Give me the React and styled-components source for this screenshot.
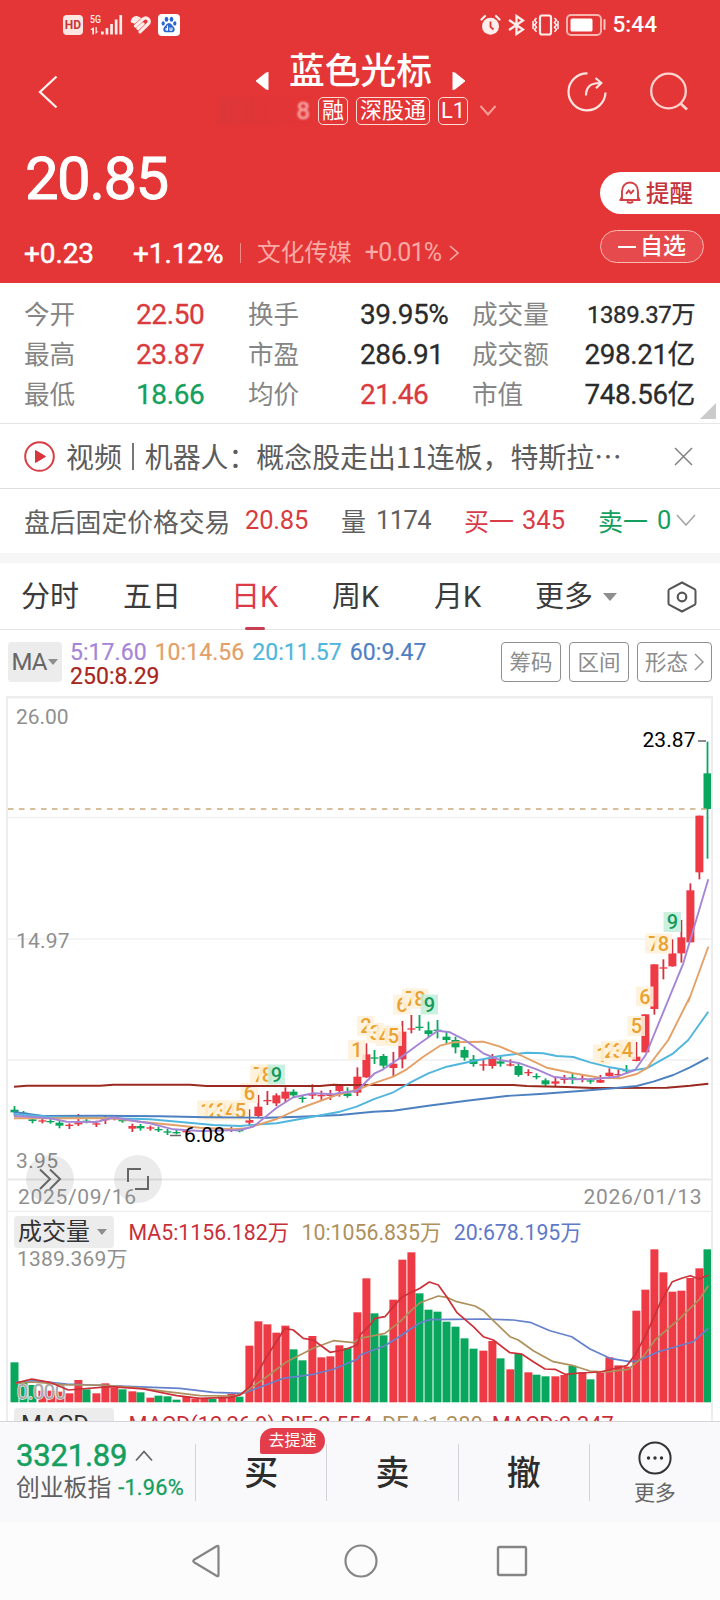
import React from "react";
import styled, { createGlobalStyle } from "styled-components";

const RED = "#e43537";
const UP = "#ee3a45";
const DOWN = "#08a75d";

const Global = createGlobalStyle`
  * { box-sizing: border-box; }
  body { margin: 0; background: #fff; font-family: Roboto, "Noto Sans CJK SC", sans-serif; }
  svg { display: block; flex: none; }
`;

const Screen = styled.div`
  width: 720px;
  height: 1600px;
  display: flex;
  flex-direction: column;
  overflow: hidden;
  background: #fff;
`;

/* ---------- red header ---------- */
const Header = styled.header`
  height: 283px;
  background: ${RED};
  color: #fff;
  flex: none;
`;
const StatusBar = styled.div`
  height: 50px;
  padding: 0 63px 0 63px;
  display: flex;
  align-items: center;
  justify-content: space-between;
`;
const StatusGroup = styled.div`
  display: flex;
  align-items: center;
  gap: ${(p) => p.$gap}px;
`;
const HdBadge = styled.span`
  width: 20px;
  height: 20px;
  border-radius: 4px;
  background: #fde6e2;
  color: #c8343a;
  font: 700 12px/20px Roboto, sans-serif;
  text-align: center;
`;
const Clock = styled.span`
  margin-left: -1px;
  font-size: 22.6px;
  font-weight: 500;
  line-height: 50px;
`;
const TitleBar = styled.div`
  height: 84px;
  display: flex;
  align-items: center;
  padding: 0 32px 0 38px;
`;
const TitleBlock = styled.div`
  width: 420px;
  margin-left: 94px;
  height: 84px;
`;
const TitleLine = styled.div`
  display: flex;
  align-items: center;
  justify-content: center;
  height: 43px;
  gap: 20px;
  padding: 2px 0 0 2px;
`;
const StockName = styled.h1`
  margin: 0;
  font-size: 35.8px;
  line-height: 43px;
  font-weight: 500;
`;
const TagLine = styled.div`
  display: flex;
  align-items: center;
  height: 28px;
  margin-top: 4px;
  padding-left: 66px;
  gap: 8px;
`;
const MaskedCode = styled.span`
  width: 92px;
  padding-right: 0;
  text-align: right;
  font-size: 24px;
  line-height: 28px;
  color: rgba(255, 225, 220, 0.85);
  background: linear-gradient(90deg, rgba(205, 60, 65, 0.3), rgba(228, 53, 55, 0.1));
  filter: blur(1px);
`;
const Tag = styled.span`
  height: 28px;
  width: ${(p) => p.$w}px;
  border: 1.4px solid #ffd9d2;
  border-radius: 5px;
  display: flex;
  justify-content: center;
  font-size: 22px;
  line-height: 25px;
  white-space: nowrap;
`;
const HeaderIcons = styled.div`
  display: flex;
  gap: 43px;
  margin-left: auto;
`;
const PriceArea = styled.div`
  display: flex;
  justify-content: space-between;
  height: 149px;
`;
const PriceColumn = styled.div`
  padding-left: 24px;
`;
const BigPrice = styled.div`
  font-size: 60px;
  line-height: 70px;
  height: 70px;
  margin: 10px 0 0 1px;
  font-weight: 400;
  -webkit-text-stroke: 0.9px #fff;
  letter-spacing: -1.6px;
`;
const ChangeLine = styled.div`
  display: flex;
  align-items: center;
  height: 40px;
  margin-top: 19px;
`;
const Change = styled.span`
  width: ${(p) => p.$w}px;
  font-size: 28px;
  -webkit-text-stroke: 0.5px #fff;
  letter-spacing: -0.1px;
`;
const Sector = styled.span`
  display: flex;
  align-items: center;
  gap: 13px;
  height: 20px;
  padding-left: 16px;
  border-left: 1px solid #f08a86;
  color: #f9aaa4;
  font-size: 23.7px;
  line-height: 20px;
`;
const SectorRate = styled.span`
  font-size: 25px;
  letter-spacing: -0.8px;
  margin-right: -5px;
`;
const SideActions = styled.div`
  width: 120px;
  padding-top: 38px;
`;
const RemindButton = styled.div`
  height: 42px;
  border-radius: 21px 0 0 21px;
  background: #fff;
  color: #c5333a;
  display: flex;
  align-items: center;
  gap: 5px;
  padding: 0 0 2px 19px;
  font-size: 23.5px;
  font-weight: 500;
`;
const WatchButton = styled.div`
  width: 104px;
  height: 33px;
  margin-top: 16px;
  border-radius: 17px;
  border: 1.3px solid #fbb9b3;
  background: #e74a4d;
  display: flex;
  align-items: center;
  justify-content: center;
  gap: 4px;
  padding-top: 1px;
  font-size: 23px;
  font-weight: 500;
  line-height: 30px;
`;
const Minus = styled.i`
  width: 18px;
  height: 2px;
  background: #fff;
`;

/* ---------- stats ---------- */
const Stats = styled.section`
  position: relative;
  height: 141px;
  flex: none;
  padding: 12px 25px 0 24px;
  border-bottom: 1.5px solid #e6e6e6;
  display: grid;
  grid-template-columns: 112px 112px 112px 112px 1fr;
  grid-auto-rows: 40px;
`;
const StatLabel = styled.span`
  font-size: 25.6px;
  line-height: 40px;
  color: #858585;
`;
const StatValue = styled.span`
  font-size: ${(p) => p.$size || 28}px;
  line-height: 40px;
  letter-spacing: -0.4px;
  white-space: nowrap;
  color: ${(p) => p.$color || "#2b2b2b"};
  -webkit-text-stroke: 0.3px currentColor;
`;
const StatPair = styled.div`
  display: flex;
  justify-content: space-between;
`;
const Corner = styled.i`
  position: absolute;
  right: 4px;
  bottom: 4px;
  border-left: 16px solid transparent;
  border-bottom: 16px solid #cacaca;
`;

/* ---------- news and after-hours rows ---------- */
const NewsRow = styled.section`
  height: 65px;
  flex: none;
  border-bottom: 1.5px solid #dedede;
  display: flex;
  align-items: center;
  padding: 0 27px 0 24px;
`;
const NewsText = styled.span`
  margin-left: 11px;
  font: 400 27.9px/40px "Noto Sans CJK SC", sans-serif;
  color: #5c5c5c;
  white-space: nowrap;
  display: flex;
  align-items: center;
`;
const NewsDivider = styled.i`
  width: 2px;
  height: 27px;
  background: #777;
  margin: 0 11px 0 10px;
`;
const NewsClose = styled.div`
  margin-left: auto;
`;
const FixedPriceRow = styled.section`
  height: 64px;
  flex: none;
  display: grid;
  grid-template-columns: 221px 96px 35px 88px 58px 76px 59px 19px 18px;
  align-items: center;
  padding: 0 0 2px 24px;
  white-space: nowrap;
`;
const FixedText = styled.span`
  font-size: ${(p) => p.$size || 25.5}px;
  color: ${(p) => p.$color || "#5f5f5f"};
  letter-spacing: ${(p) => p.$ls || 0}px;
`;
const Band = styled.div`
  height: 10px;
  flex: none;
  background: #f6f6f6;
`;

/* ---------- tabs ---------- */
const Tabs = styled.nav`
  height: 67px;
  flex: none;
  display: grid;
  grid-template-columns: 102px 108px 101px 102px 101px 132px 30px;
  padding-left: 21px;
  border-bottom: 1.5px solid #e4e4e4;
`;
const Tab = styled.span`
  position: relative;
  display: flex;
  align-items: center;
  gap: 10px;
  font-size: 29px;
  line-height: 66px;
  padding-top: ${(p) => (p.$icon ? 0 : 1)}px;
  color: ${(p) => (p.$active ? "#dc3a48" : "#3b3b3b")};
  &::after {
    content: "";
    display: ${(p) => (p.$active ? "block" : "none")};
    position: absolute;
    left: 14px;
    bottom: 0;
    width: 20px;
    height: 3px;
    border-radius: 2px;
    background: #c93f52;
  }
`;
const Caret = styled.i`
  border: ${(p) => p.$s}px solid transparent;
  border-bottom: 0;
  border-top: ${(p) => p.$s + 1}px solid ${(p) => p.$color || "#8e8e8e"};
`;

/* ---------- moving average row ---------- */
const AverageRow = styled.section`
  height: 66px;
  flex: none;
  display: flex;
  padding: 12px 8px 0 8px;
`;
const MaPicker = styled.div`
  width: 54px;
  height: 40px;
  border-radius: 4px;
  background: #ececec;
  color: #666;
  font-size: 24px;
  letter-spacing: -1px;
  display: flex;
  align-items: center;
  justify-content: center;
  gap: 2px;
`;
const MaValues = styled.div`
  width: 400px;
  margin: -1px 0 0 8px;
  display: flex;
  flex-wrap: wrap;
  align-content: flex-start;
  column-gap: 8px;
`;
const MaValue = styled.span`
  font-size: 23px;
  line-height: 24px;
  color: ${(p) => p.$color};
  letter-spacing: 0.05px;
  -webkit-text-stroke: 0.2px currentColor;
`;
const ToolButtons = styled.div`
  display: flex;
  gap: 8px;
  margin-left: auto;
`;
const ToolButton = styled.span`
  width: ${(p) => p.$w}px;
  height: 40px;
  padding-bottom: 3px;
  border: 1.3px solid #8f8f8f;
  border-radius: 4px;
  color: #8c8c8c;
  font-size: 21.5px;
  display: flex;
  align-items: center;
  justify-content: center;
  gap: 6px;
  svg { margin-top: 3px; }
`;

/* ---------- charts ---------- */
const ChartPanel = styled.section`
  height: 725px;
  flex: none;
  margin: 0 7px 0 6px;
  border: 2px solid #ededed;
  border-width: 0 2px;
  overflow: hidden;
`;
const IndicatorHeader = styled.div`
  height: ${(p) => p.$h}px;
  overflow: hidden;
  display: flex;
  align-items: flex-start;
  padding-left: 6px;
  white-space: nowrap;
`;
const IndicatorPicker = styled.div`
  width: 100px;
  height: 32px;
  margin-top: ${(p) => p.$mt}px;
  margin-right: 14.5px;
  border-radius: 4px;
  background: #ececec;
  color: #333;
  font-size: 24px;
  line-height: 34px;
  padding: 0 7px 0 ${(p) => p.$pl}px;
  display: flex;
  align-items: center;
  justify-content: space-between;
`;
const IndicatorValue = styled.span`
  font-size: ${(p) => p.$size || 21.3}px;
  line-height: 34px;
  margin-top: ${(p) => p.$mt}px;
  margin-right: ${(p) => p.$mr}px;
  color: ${(p) => p.$color};
`;

/* ---------- bottom ---------- */
const ActionBar = styled.footer`
  height: 101px;
  flex: none;
  border-top: 1.5px solid #d5d5d8;
  background: #f9f9fc;
  display: flex;
`;
const IndexBlock = styled.div`
  width: 195px;
  padding: 14px 0 0 16px;
  white-space: nowrap;
`;
const IndexValue = styled.div`
  display: flex;
  align-items: center;
  gap: 7px;
  height: 40px;
  font-size: 31px;
  line-height: 40px;
  -webkit-text-stroke: 0.5px currentColor;
  letter-spacing: -0.2px;
  color: #159f5e;
`;
const IndexName = styled.div`
  display: flex;
  align-items: center;
  gap: 7px;
  height: 26px;
  margin-top: -1px;
  font-size: 23.8px;
  line-height: 26px;
  color: #606060;
`;
const IndexChange = styled.span`
  font-size: 21.8px;
  -webkit-text-stroke: 0.3px currentColor;
  letter-spacing: 0.2px;
  color: #159f5e;
`;
const Action = styled.div`
  position: relative;
  flex: 1;
  display: flex;
  flex-direction: column;
  align-items: center;
  font-size: ${(p) => (p.$small ? 21 : 34)}px;
  font-weight: ${(p) => (p.$small ? 400 : 500)};
  line-height: ${(p) => (p.$small ? 36 : 103)}px;
  padding-top: ${(p) => (p.$small ? 19 : 0)}px;
  padding-left: 1px;
  color: ${(p) => (p.$small ? "#666" : "#2d2d2d")};
  &::before {
    content: "";
    position: absolute;
    left: 0;
    top: 22px;
    width: 1px;
    height: 57px;
    background: #d4d4d8;
  }
`;
const SpeedBadge = styled.span`
  position: absolute;
  left: 65px;
  top: 6px;
  width: 65px;
  height: 26px;
  border-radius: 13px 13px 13px 2px;
  background: #e33d4b;
  color: #fff;
  font-size: 16px;
  font-weight: 400;
  line-height: 25px;
  text-align: center;
`;
const NavBar = styled.div`
  height: 78px;
  flex: none;
  background: #fcfcfc;
  display: flex;
  align-items: center;
  justify-content: center;
  gap: 117.5px;
  padding-right: 1px;
`;

/* ---------- chart data ---------- */
// [index, rising, high, bodyTop, bodyBottom, low] in chart pixels
const scale = (base, rows) =>
  rows.map(([i, up, ...ys]) => [i, up, ...ys.map((y) => base + y / 3)]);
const candles = [
  ...scale(980, [
    [0, 0, 378, 389, 397, 407], [1, 0, 393, 398, 401, 408], [2, 0, 414, 418, 423, 430],
    [3, 1, 415, 421, 424, 430], [4, 0, 417, 423, 426, 431], [5, 0, 420, 428, 437, 445],
    [6, 1, 430, 434, 438, 447], [7, 1, 402, 427, 433, 438], [8, 0, 415, 422, 425, 430],
    [9, 1, 422, 430, 433, 441], [10, 1, 408, 417, 420, 432], [11, 1, 408, 414, 417, 421],
    [12, 0, 414, 420, 423, 428], [13, 1, 431, 438, 446, 456], [14, 0, 432, 438, 445, 452],
    [15, 1, 437, 442, 446, 452], [16, 0, 440, 447, 450, 456], [17, 0, 447, 454, 457, 465],
    [18, 0, 450, 456, 459, 463], [19, 1, 448, 453, 456, 462], [24, 1, 440, 448, 451, 456],
    [25, 0, 444, 450, 453, 457], [26, 1, 388, 420, 428, 435], [27, 1, 345, 380, 408, 412],
    [28, 1, 333, 360, 363, 375], [29, 1, 340, 346, 370, 378], [30, 1, 322, 335, 356, 368],
    [31, 0, 328, 335, 346, 352], [32, 0, 345, 353, 356, 368], [33, 1, 313, 342, 347, 357],
    [34, 1, 332, 345, 348, 362], [35, 1, 330, 344, 347, 360], [36, 1, 312, 315, 333, 350],
  ]),
  ...scale(960, [
    [37, 0, 382, 400, 408, 413], [38, 1, 322, 350, 398, 408], [39, 1, 250, 283, 352, 354],
    [40, 0, 270, 292, 295, 312], [41, 0, 282, 288, 317, 325], [42, 1, 276, 311, 324, 350],
    [43, 1, 183, 215, 298, 325], [44, 1, 165, 205, 208, 220], [45, 0, 165, 200, 203, 212],
    [46, 0, 185, 211, 222, 232], [47, 0, 180, 209, 212, 235], [48, 0, 215, 230, 240, 252],
    [49, 0, 230, 240, 262, 280], [50, 0, 260, 270, 293, 302], [51, 0, 285, 298, 312, 320],
    [52, 1, 300, 313, 316, 332], [53, 1, 282, 296, 318, 326], [54, 0, 290, 304, 311, 320],
    [55, 1, 298, 313, 316, 319], [56, 0, 310, 318, 345, 350], [57, 1, 328, 336, 339, 348],
    [58, 0, 340, 348, 351, 358], [59, 0, 355, 361, 373, 381], [60, 1, 350, 364, 371, 380],
    [61, 1, 345, 356, 359, 371], [62, 0, 338, 352, 356, 372], [63, 1, 345, 355, 358, 367],
    [64, 0, 355, 361, 364, 371], [65, 1, 345, 360, 368, 369], [66, 1, 325, 338, 348, 350],
    [67, 1, 328, 342, 345, 357], [68, 0, 315, 330, 333, 342], [69, 1, 246, 290, 303, 304],
    [70, 1, 163, 163, 277, 277],
  ]),
  ...scale(690, [
    [71, 1, 823, 823, 957, 974], [72, 1, 808, 832, 835, 868], [73, 1, 748, 790, 829, 830],
    [74, 1, 690, 742, 790, 818], [75, 1, 580, 601, 757, 757], [76, 1, 377, 377, 547, 568],
    [77, 0, 155, 250, 357, 506],
  ]),
];

const path = (...groups) =>
  groups
    .flatMap(([ox, oy, s]) =>
      s.split(" ").map((p) => {
        const [x, y] = p.split(",").map(Number);
        return `${(ox + x / 3).toFixed(1)},${(oy + y / 3).toFixed(1)}`;
      })
    )
    .join(" ");

const priceLines = [
  ["#9a2a20", path([0, 980, "42,320 80,317 300,317 340,314 570,314 620,318 960,318 1000,314"], [340, 960, "0,375 520,375 560,378 680,381 760,384 980,383 1050,377 1105,371"])],
  ["#4d80c0", path([0, 980, "42,396 130,408 300,407 480,409 620,412 800,413 900,410"], [340, 960, "0,465 100,455 160,452 265,437 380,422 500,408 600,402 720,393 820,385 890,378 940,365 1000,345 1050,322 1105,293"])],
  ["#50b6dd", path([0, 980, "42,402 150,410 230,413 340,415 450,418 550,427 640,435 720,438 780,433 830,430 950,408"], [340, 960, "0,455 50,440 100,418 160,397 210,368 265,340 320,320 400,303 480,288 560,278 610,280 650,288 700,291 750,307 810,322 870,332 920,325 1000,280 1045,240 1105,155"])],
  ["#e3a067", path([0, 980, "42,415 200,415 340,415 420,425 520,435 600,443 700,448 740,445 830,417 900,385 960,363 1010,345"], [340, 960, "50,390 100,370 160,350 200,328 250,290 300,257 340,247 430,245 480,260 540,285 620,323 700,340 780,353 840,355 890,342 920,325 985,240 1050,110"], [560, 690, "385,935 445,770"])],
  ["#a585d6", path([0, 980, "42,408 100,411 150,415 200,425 290,426 340,412 400,422 450,430 520,448 600,453 720,450 760,440 830,383 880,352 940,340 1000,343"], [340, 960, "0,398 50,393 104,340 130,328 185,290 240,250 293,212 330,217 375,240 430,280 480,300 540,310 590,328 640,350 700,358 760,357 830,350 885,330 917,285"], [560, 690, "370,820 445,568"])],
];

const tags = [
  [1, 206, 1117.5], [2, 214, 1117.5], [3, 222, 1117.5], [4, 231, 1117.5], [5, 240.5, 1117.5],
  [6, 249.5, 1100], [7, 259, 1081.5], [8, 267.5, 1081.5], [9, 276.5, 1081.5],
  [1, 357, 1057], [2, 366, 1033], [3, 375.5, 1040], [4, 384.5, 1043], [5, 393.5, 1043],
  [6, 402, 1011.5], [7, 411, 1005.5], [8, 420, 1005.5], [9, 429.5, 1011.5],
  [1, 602, 1061.5], [2, 610, 1058], [3, 618.5, 1058], [4, 627.5, 1056.5], [5, 636.5, 1033],
  [6, 645, 1003.5], [7, 654, 950.5], [8, 663.5, 950.5], [9, 672.5, 929],
];

const volumes =
  "487G 548G 555G 572R 572R 575R 580R 540R 568G 580R 550R 563R 568G 574R 577G 593R 587G 589G 599G 590R 596R 595R 597G 590R 582R 590G 437R 364R 373R 398R 377R 448G 481G 408R 472R 469R 436R 444G 337R 235R 340G 406G 299R 179R 157R 280G 329G 335G 365G 380G 415G 446G 452R 423R 475G 508R 462G 517R 524G 529G 529R 525R 497G 517R 538G 518R 472R 496R 500R 332R 269R 148R 217R 275R 272R 234R 205R 148G"
    .split(" ")
    .map((v) => ({ y: 1200 + parseInt(v, 10) / 3, up: v.endsWith("R") }));

const volumeLines = [
  ["#6680cc", path([0, 1200, "45,548 100,542 200,552 400,560 540,565 640,577 730,580 850,535 940,523 1000,508 1072,478"], [360, 1200, "0,465 75,437 125,405 180,368 210,359 280,358 370,357 460,360 510,367 570,392 635,410 690,447 750,475 805,484 830,484 895,455 1000,425 1045,385"])],
  ["#ae905c", path([0, 1200, "45,550 95,546 150,550 200,555 300,555 400,562 500,575 600,587 700,588 730,580 800,530 860,485 940,445 1000,422 1060,428"], [360, 1200, "0,415 75,400 120,365 150,335 180,308 235,288 260,292 290,305 345,318 370,332 400,362 450,410 475,420 520,452 580,485 640,497 690,513 740,516 805,508 850,470 885,420 960,355 1018,298 1045,257"])],
  ["#cc3038", path([0, 1200, "45,550 95,537 150,547 205,570 330,560 430,567 530,587 600,595 690,592 720,585 750,560 800,470 855,385 880,390 910,415 940,420 990,457 1030,450 1072,435"], [360, 1200, "0,405 30,375 45,355 75,350 100,320 127,290 180,265 208,246 235,255 260,290 290,337 340,380 370,410 400,420 450,458 485,462 520,485 555,507 585,508 615,523 660,519 720,516 800,497 825,465 860,400 900,310 937,245 965,235 991,227 1018,237 1045,225"])],
];

const barX = (i, up) => 14.5 + i * 9 + (up ? 0.9 : 0);

const AxisText = ({ x, y, w, fill = "#8f8f8f", size = 21, children, ...rest }) => (
  <text x={x} y={y} textLength={w} fill={fill} fontSize={size} {...rest}>
    {children}
  </text>
);

function PriceChart() {
  return (
    <svg width="703" height="516" viewBox="8 696 703 516">
      <rect x="8" y="696" width="703" height="2.5" fill="#ededed" />
      {[817.5, 939, 1060].map((y) => (
        <path key={y} d={`M8 ${y}H711`} stroke="#f0f0f0" strokeWidth="1.5" />
      ))}
      <path d="M8 1179.5H711" stroke="#e9e9e9" strokeWidth="2" />
      <path d="M8 1211.5H711" stroke="#ededed" strokeWidth="1.5" />
      <AxisText x="16" y="723.5" w="52.5">26.00</AxisText>
      <AxisText x="16" y="947.5" w="53.5">14.97</AxisText>
      <AxisText x="16" y="1167.5" w="42">3.95</AxisText>
      <circle cx="50" cy="1179" r="24" fill="#000" opacity="0.08" />
      <circle cx="138" cy="1179" r="24" fill="#000" opacity="0.08" />
      <AxisText x="18" y="1204" w="118">2025/09/16</AxisText>
      <AxisText x="583.5" y="1204" w="118">2026/01/13</AxisText>
      <g fill="none" stroke="#666" strokeWidth="2">
        <path d="M40 1169.500l10 9.500l-10 10M50 1169.500l10 9.500l-10 10" />
        <path d="M141 1169H128v13M135 1189h13v-13" />
      </g>
      {candles.map(([i, up, hi, top, bottom, low]) => {
        const x = barX(i, up);
        const c = up ? UP : DOWN;
        return (
          <g key={i} fill={c}>
            <rect x={x - 0.9} y={hi} width="1.8" height={low - hi} fill={up ? "#cf3340" : c} />
            <rect x={x - 4} y={top} width="8" height={Math.max(1.3, bottom - top)} />
          </g>
        );
      })}
      {tags.map(([n, x, y], k) => (
        <g key={k}>
          <rect x={x - 9} y={y - 17} width="17.500" height="20" fill={n === 9 ? "#c5eedb" : "#fff1dc"} opacity="0.88" />
          <text x={x} y={y} textAnchor="middle" fontSize="20" fontWeight="500" fill={n === 9 ? "#159a5a" : "#eba130"}>
            {n}
          </text>
        </g>
      ))}
      {priceLines.map(([c, pts]) => (
        <polyline key={c} points={pts} fill="none" stroke={c} strokeWidth="1.9" strokeLinejoin="round" />
      ))}
      <path d="M8 809H711" stroke="#cbab7c" strokeWidth="1.6" strokeDasharray="5.500 5.500" />
      <path d="M170 1135.500h11M698 741h8" stroke="#666" strokeWidth="1.3" />
      <AxisText x="184" y="1141.500" w="41" fill="#000">6.08</AxisText>
      <AxisText x="642.5" y="746.500" w="53" fill="#000">23.87</AxisText>
    </svg>
  );
}

function VolumeChart() {
  return (
    <svg width="703" height="160" viewBox="8 1248 703 160">
      {volumes.map((v, i) => (
        <rect key={i} x={barX(i, v.up) - 4} y={v.y} width="8" height={1402.3 - v.y} fill={v.up ? UP : DOWN} />
      ))}
      <AxisText x="17" y="1399" w="49" size="20" fill="#a5a5a5" stroke="#eee" strokeWidth="1.5" paintOrder="stroke">
        0.000
      </AxisText>
      {volumeLines.map(([c, pts]) => (
        <polyline key={c} points={pts} fill="none" stroke={c} strokeWidth="1.7" strokeLinejoin="round" />
      ))}
      <AxisText x="17" y="1265.500" w="110.5">1389.369万</AxisText>
    </svg>
  );
}

/* ---------- icons ---------- */
const SignalIcon = () => (
  <svg width="33" height="22" viewBox="0 0 33 22" fill="#ffece8">
    <text x="0" y="9" fontSize="11" fontWeight="500" textLength="11" lengthAdjust="spacingAndGlyphs">5G</text>
    <path d="M3 13.500L0 16h2.300v4.500H4v-7zM5.500 13v7l3-2.500H6.800V13z" />
    <rect x="11" y="17.500" width="2.700" height="3" />
    <rect x="15.600" y="14" width="2.700" height="6.500" />
    <rect x="20.200" y="10" width="2.700" height="10.500" />
    <rect x="24.800" y="5.500" width="2.700" height="15" />
    <rect x="29.400" y="1" width="2.700" height="19.500" />
  </svg>
);
const HeartIcon = () => (
  <svg width="21" height="20" viewBox="0 0 21 20" fill="none" stroke="#ffece8" strokeWidth="3.200" strokeLinecap="round">
    <path d="M2.300 6.300C3 3 6 1.800 8.500 3.300L4.300 7M5.500 11l7.300-6.700c2-1.700 4-1.700 5.400-.2 1.500 1.700 1 3.900-.6 5.400L10 16.800M8 13.500l5-4.600" />
  </svg>
);
const PawIcon = () => (
  <svg width="22" height="22" viewBox="0 0 22 22">
    <rect width="22" height="22" rx="4" fill="#fff" />
    <g fill="#2a66cf">
      <ellipse cx="8.500" cy="5.200" rx="1.800" ry="2.500" />
      <ellipse cx="13.500" cy="5.200" rx="1.800" ry="2.500" />
      <ellipse cx="5.200" cy="9.400" rx="1.600" ry="2.200" />
      <ellipse cx="16.800" cy="9.400" rx="1.600" ry="2.200" />
      <path d="M11 9c2.300 0 2.800 2.300 4.500 3.700 1.900 1.700 1.700 5.600-1.700 5.600H8.200c-3.400 0-3.600-3.900-1.700-5.600C8.200 11.300 8.700 9 11 9z" />
    </g>
    <path d="M9.500 11.500v5M9.300 14.200c-2 0-2 2.300 0 2.300M12 13.500v2.300c0 .8 2 .8 2 0v-2.300" stroke="#fff" fill="none" strokeWidth="1.100" />
  </svg>
);
const AlarmIcon = () => (
  <svg width="21" height="22" viewBox="0 0 21 22">
    <circle cx="10.500" cy="12.300" r="8.500" fill="#ffefec" />
    <path d="M1.500 5.500l3.500-3.500M19.500 5.500L16 2" stroke="#ffefec" strokeWidth="2.200" strokeLinecap="round" />
    <path d="M10.500 7.500v5.300l3 2.700" fill="none" stroke={RED} strokeWidth="1.800" />
  </svg>
);
const BluetoothIcon = () => (
  <svg width="17" height="22" viewBox="0 0 17 22" fill="none" stroke="#ffefec" strokeWidth="2.300">
    <path d="M1 6l14 9.500L8.500 20V2L15 6.500 1 16" />
  </svg>
);
const VibrateIcon = () => (
  <svg width="27" height="22" viewBox="0 0 27 22" fill="none" stroke="#ffefec" strokeWidth="2.200">
    <rect x="8" y="1.500" width="11" height="19" rx="2" />
    <path d="M4.500 4l-2 2.300 2 2.300-2 2.300 2 2.300-2 2.300 2 2.300M1 7v8M22.500 4l2 2.300-2 2.300 2 2.300-2 2.300 2 2.300-2 2.300M26 7v8" strokeWidth="1.600" />
  </svg>
);
const BatteryIcon = () => (
  <svg width="41" height="22" viewBox="0 0 41 22">
    <rect x="1" y="1" width="34" height="20" rx="4" fill="none" stroke="#fab5b0" strokeWidth="1.900" />
    <rect x="4.500" y="4.500" width="22" height="13" rx="1.500" fill="#fff" />
    <rect x="37.500" y="5" width="2" height="11" rx="1" fill="#f9c6c1" />
  </svg>
);
const Chevron = ({ w, h, d, color, sw = 2 }) => (
  <svg width={w} height={h} viewBox={`0 0 ${w} ${h}`} fill="none" stroke={color} strokeWidth={sw}>
    <path d={d} />
  </svg>
);
const ShareIcon = () => (
  <svg width="40" height="40" viewBox="0 0 40 40" fill="none" stroke="#ffe4e0" strokeWidth="2.200">
    <path d="M20.500 1.300a18.500 18.500 0 1 0 18 19.200" />
    <path d="M19 23.500c0-8 4-12.500 13.500-12.500M28.500 6l5.800 5-5.300 5.300" />
  </svg>
);
const SearchIcon = () => (
  <svg width="38" height="40" viewBox="0 0 38 40" fill="none" stroke="#ffd3ce" strokeWidth="2.300">
    <circle cx="18.500" cy="19" r="17.300" />
    <path d="M30 31l7 6.500" strokeWidth="2.800" />
  </svg>
);
const BellIcon = () => (
  <svg width="22" height="23" viewBox="0 0 22 23" fill="none" stroke="#d23f44" strokeWidth="1.900">
    <path d="M.5 19h21M3 19v-2.500V10.500C3 4.800 6.500 1.500 11 1.500s8 3.300 8 9V19M3 15.500L1.500 19M19 15.500l1.500 3.500" />
    <path d="M7 12.800l2.700-3.200 2.200 2.700 3-3.300M8 20.500c1.500 1.700 4.500 1.700 6 0" />
  </svg>
);

export default function App() {
  return (
    <Screen lang="zh-CN">
      <Global />
      <Header>
        <StatusBar>
          <StatusGroup $gap={7}>
            <HdBadge>HD</HdBadge>
            <SignalIcon />
            <HeartIcon />
            <PawIcon />
          </StatusGroup>
          <StatusGroup $gap={7}>
            <AlarmIcon />
            <BluetoothIcon />
            <VibrateIcon />
            <BatteryIcon />
            <Clock>5:44</Clock>
          </StatusGroup>
        </StatusBar>
        <TitleBar>
          <Chevron w={20} h={34} d="M18.500 1.500L2 17l16.500 15.500" color="#fff0ec" sw={2.3} />
          <TitleBlock>
            <TitleLine>
              <svg width="13" height="18" viewBox="0 0 13 18" fill="#fff" transform="translate(0 8)"><path d="M12.500 0v18L10 17.500 0 9.500v-1L10 .5z" /></svg>
              <StockName>蓝色光标</StockName>
              <svg width="13" height="18" viewBox="0 0 13 18" fill="#fff" transform="translate(0 8)"><path d="M.5 0v18L3 17.500l10-8v-1L3 .5z" /></svg>
            </TitleLine>
            <TagLine>
              <MaskedCode>8</MaskedCode>
              <Tag $w={30}>融</Tag>
              <Tag $w={74}>深股通</Tag>
              <Tag $w={30}>L1</Tag>
              <Chevron w={24} h={12} d="M4.500 1l7.500 8.500L19.500 1" color="#f79e99" />
            </TagLine>
          </TitleBlock>
          <HeaderIcons>
            <ShareIcon />
            <SearchIcon />
          </HeaderIcons>
        </TitleBar>
        <PriceArea>
          <PriceColumn>
            <BigPrice>20.85</BigPrice>
            <ChangeLine>
              <Change $w={109}>+0.23</Change>
              <Change $w={107}>+1.12%</Change>
              <Sector>
                文化传媒
                <SectorRate>+0.01%</SectorRate>
                <Chevron w={10} h={16} d="M1 1l8 7-8 7" color="#f9aaa4" sw={1.6} />
              </Sector>
            </ChangeLine>
          </PriceColumn>
          <SideActions>
            <RemindButton>
              <BellIcon />
              提醒
            </RemindButton>
            <WatchButton>
              <Minus />
              自选
            </WatchButton>
          </SideActions>
        </PriceArea>
      </Header>

      <Stats>
        <StatLabel>今开</StatLabel>
        <StatValue $color="#d93b3d">22.50</StatValue>
        <StatLabel>换手</StatLabel>
        <StatValue>39.95%</StatValue>
        <StatPair>
          <StatLabel>成交量</StatLabel>
          <StatValue $size={24}>1389.37万</StatValue>
        </StatPair>
        <StatLabel>最高</StatLabel>
        <StatValue $color="#d93b3d">23.87</StatValue>
        <StatLabel>市盈</StatLabel>
        <StatValue>286.91</StatValue>
        <StatPair>
          <StatLabel>成交额</StatLabel>
          <StatValue $size={27.8}>298.21亿</StatValue>
        </StatPair>
        <StatLabel>最低</StatLabel>
        <StatValue $color="#159f5e">18.66</StatValue>
        <StatLabel>均价</StatLabel>
        <StatValue $color="#d93b3d">21.46</StatValue>
        <StatPair>
          <StatLabel>市值</StatLabel>
          <StatValue $size={27.8}>748.56亿</StatValue>
        </StatPair>
        <Corner />
      </Stats>

      <NewsRow>
        <svg width="31" height="31" viewBox="0 0 31 31">
          <circle cx="15.500" cy="15.500" r="14.300" fill="none" stroke="#d83f45" strokeWidth="2" />
          <path d="M11.500 9.500v12l10-6z" fill="#d8363c" stroke="#d8363c" strokeLinejoin="round" />
        </svg>
        <NewsText>
          视频
          <NewsDivider />
          机器人：概念股走出11连板，特斯拉⋯
        </NewsText>
        <NewsClose>
          <Chevron w={19} h={19} d="M1 1l17 17M18 1L1 18" color="#808080" sw={1.5} />
        </NewsClose>
      </NewsRow>

      <FixedPriceRow>
        <FixedText $size={25.8}>盘后固定价格交易</FixedText>
        <FixedText $color="#d93b3d" $ls={-0.2}>20.85</FixedText>
        <FixedText $size={25}>量</FixedText>
        <FixedText $ls={-0.6}>1174</FixedText>
        <FixedText $size={25} $color="#d93b48">买一</FixedText>
        <FixedText $color="#d93b48">345</FixedText>
        <FixedText $size={25} $color="#159f5e">卖一</FixedText>
        <FixedText $color="#159f5e">0</FixedText>
        <Chevron w={20} h={13} d="M1 1l9 10 9-10" color="#a8a8a8" sw={1.7} />
      </FixedPriceRow>
      <Band />

      <Tabs>
        <Tab>分时</Tab>
        <Tab>五日</Tab>
        <Tab $active>日K</Tab>
        <Tab>周K</Tab>
        <Tab>月K</Tab>
        <Tab>更多<Caret $s={7.5} /></Tab>
        <Tab $icon>
          <svg width="30" height="32" viewBox="0 0 30 32" fill="none" stroke="#555" strokeWidth="2">
            <path d="M15 1.500L27.500 8q1 .6 1 2v12q0 1.400-1 2L15 30.500 2.500 24q-1-.6-1-2V10q0-1.400 1-2z" />
            <circle cx="15" cy="16" r="4.300" strokeWidth="2.200" />
          </svg>
        </Tab>
      </Tabs>

      <AverageRow>
        <MaPicker>MA<Caret $s={5} /></MaPicker>
        <MaValues>
          <MaValue $color="#a585d6">5:17.60</MaValue>
          <MaValue $color="#e3a067">10:14.56</MaValue>
          <MaValue $color="#50b6dd">20:11.57</MaValue>
          <MaValue $color="#5080c4">60:9.47</MaValue>
          <MaValue $color="#a82620">250:8.29</MaValue>
        </MaValues>
        <ToolButtons>
          <ToolButton $w={60}>筹码</ToolButton>
          <ToolButton $w={60}>区间</ToolButton>
          <ToolButton $w={75}>
            形态
            <Chevron w={10} h={18} d="M1 1l8 8-8 8" color="#8f8f8f" sw={1.4} />
          </ToolButton>
        </ToolButtons>
      </AverageRow>

      <ChartPanel>
        <PriceChart />
        <IndicatorHeader $h={36}>
          <IndicatorPicker $mt={4} $pl={4}>成交量<Caret $s={5} /></IndicatorPicker>
          <IndicatorValue $mt={4} $mr={12.5} $color="#c92f3a">MA5:1156.182万</IndicatorValue>
          <IndicatorValue $mt={4} $mr={12.5} $color="#ae905c">10:1056.835万</IndicatorValue>
          <IndicatorValue $mt={4} $mr={0} $color="#6078c8">20:678.195万</IndicatorValue>
        </IndicatorHeader>
        <VolumeChart />
        <IndicatorHeader $h={13}>
          <IndicatorPicker $mt={0} $pl={7}>MACD<Caret $s={5} $color="#bbb" /></IndicatorPicker>
          <IndicatorValue $size={21.8} $mt={0} $mr={9} $color="#c92f3a">MACD(12,26,9) DIF:2.554</IndicatorValue>
          <IndicatorValue $size={21.8} $mt={0} $mr={9} $color="#ae905c">DEA:1.380</IndicatorValue>
          <IndicatorValue $size={21.8} $mt={0} $mr={0} $color="#c92f3a">MACD:2.347</IndicatorValue>
        </IndicatorHeader>
      </ChartPanel>

      <ActionBar>
        <IndexBlock>
          <IndexValue>
            3321.89
            <Chevron w={20} h={12} d="M2 10.500l8-9 8 9" color="#666" sw={1.8} />
          </IndexValue>
          <IndexName>
            创业板指 <IndexChange>-1.96%</IndexChange>
          </IndexName>
        </IndexBlock>
        <Action>
          买
          <SpeedBadge>去提速</SpeedBadge>
        </Action>
        <Action>卖</Action>
        <Action>撤</Action>
        <Action $small>
          <svg width="34" height="34" viewBox="0 0 34 34" fill="#333">
            <circle cx="17" cy="17" r="15.600" fill="none" stroke="#333" strokeWidth="2" />
            <circle cx="10.500" cy="17" r="1.700" />
            <circle cx="17" cy="17" r="1.700" />
            <circle cx="23.500" cy="17" r="1.700" />
          </svg>
          更多
        </Action>
      </ActionBar>
      <NavBar>
        <svg width="36" height="34" viewBox="0 0 36 34" fill="none" stroke="#858585" strokeWidth="2.200" strokeLinejoin="round">
          <path d="M28.500 3v28q0 2-2 .8L4 18.200q-1.500-1.200 0-2.400L26.500 2.200q2-1.200 2 .8z" />
        </svg>
        <svg width="34" height="34" viewBox="0 0 34 34" fill="none" stroke="#858585" strokeWidth="2.200">
          <circle cx="17" cy="17" r="15.500" />
        </svg>
        <svg width="34" height="34" viewBox="0 0 34 34" fill="none" stroke="#858585" strokeWidth="2.400">
          <rect x="3" y="3" width="28" height="28" rx="1.500" />
        </svg>
      </NavBar>
    </Screen>
  );
}
